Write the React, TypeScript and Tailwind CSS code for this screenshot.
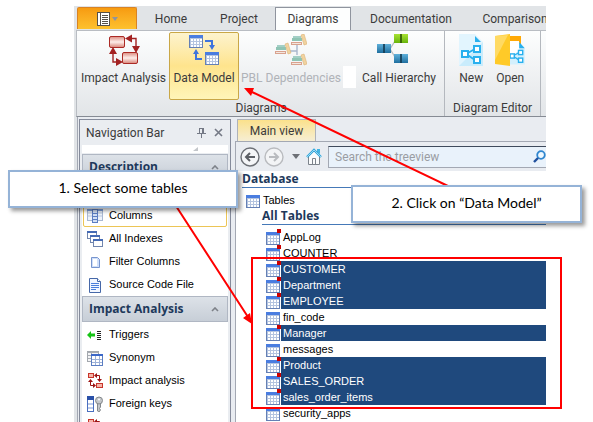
import type { ReactNode } from 'react';

const tables = [
  { name: 'AppLog', marked: true, selected: false },
  { name: 'COUNTER', marked: true, selected: false },
  { name: 'CUSTOMER', marked: true, selected: true },
  { name: 'Department', marked: true, selected: true },
  { name: 'EMPLOYEE', marked: true, selected: true },
  { name: 'fin_code', marked: false, selected: false },
  { name: 'Manager', marked: true, selected: true },
  { name: 'messages', marked: false, selected: false },
  { name: 'Product', marked: true, selected: true },
  { name: 'SALES_ORDER', marked: true, selected: true },
  { name: 'sales_order_items', marked: true, selected: true },
  { name: 'security_apps', marked: false, selected: false },
];

function TableShape({ x = 0, y = 0 }: { x?: number; y?: number }) {
  return (
    <g transform={`translate(${x} ${y})`}>
      <rect x="0.5" y="0.5" width="13" height="12" fill="#b4c4e0" stroke="#6580b5" />
      <rect x="0" y="0" width="14" height="3" fill="#4a7de0" />
      <path
        d="M2 4h2v2H2zM5 4h2v2H5zM8 4h2v2H8zM11 4h2v2h-2zM2 7h2v2H2zM5 7h2v2H5zM8 7h2v2H8zM11 7h2v2h-2zM2 10h2v2H2zM5 10h2v2H5zM8 10h2v2H8zM11 10h2v2h-2z"
        fill="#fff"
      />
    </g>
  );
}

function TableIcon({ marked = false }: { marked?: boolean }) {
  return (
    <svg width="15" height="16" viewBox="0 0 15 16" className="shrink-0">
      <TableShape y={3} />
      {marked && <rect x="11" y="0" width="4" height="4" fill="#cc0000" />}
    </svg>
  );
}

function ImpactIcon() {
  return (
    <svg width="32" height="32" viewBox="0 0 32 32">
      <defs>
        <linearGradient id="impactBox" x1="0" y1="0" x2="0" y2="1">
          <stop offset="0" stopColor="#dc8c80" />
          <stop offset="0.5" stopColor="#fdeeea" />
          <stop offset="1" stopColor="#d98478" />
        </linearGradient>
      </defs>
      <path d="M20 4.500h8v10M5 17v11h6" fill="none" stroke="#a32222" strokeWidth="1.4" />
      <path d="M17 4.500l7-4v8zM28 19l-4-7h8zM5 13l-4 7h8zM15 28l-7-4v8z" fill="#a32222" />
      <rect x="1.5" y="2.5" width="15" height="11" rx="1.5" fill="url(#impactBox)" stroke="#ab2a25" />
      <rect x="14.5" y="18.5" width="15" height="11" rx="1.5" fill="url(#impactBox)" stroke="#ab2a25" />
    </svg>
  );
}

function SmallImpactIcon() {
  return (
    <svg width="16" height="16" viewBox="0 0 16 16">
      <path d="M8 2.500h4.500V7M3.500 7v5.500H7" fill="none" stroke="#9c1414" />
      <path d="M7 2.500l3-2.500v5zM12.500 9L10 6h5zM3.500 6L1 9h5zM9 12.500L6 10v5z" fill="#9c1414" />
      <rect x="1.500" y="0.500" width="5" height="4" fill="#f5b4a8" stroke="#c8352b" />
      <rect x="9.500" y="10.500" width="6" height="4" fill="#f5b4a8" stroke="#c8352b" />
    </svg>
  );
}

function DataModelIcon() {
  return (
    <svg width="32" height="32" viewBox="0 0 32 32">
      <TableShape x={1} y={1} />
      <TableShape x={17} y={18} />
      <path d="M17 7h7v5M14 25H8v-6" fill="none" stroke="#3f74dd" strokeWidth="2" />
      <path d="M24 16l-3-5h6zM8 15l-3 5h6z" fill="#3f74dd" />
    </svg>
  );
}

function Books({ x, y }: { x: number; y: number }) {
  return (
    <g transform={`translate(${x} ${y})`}>
      <rect x="0" y="8" width="11" height="3" fill="#d9a28e" />
      <rect x="1" y="9" width="9" height="1" fill="#f3e6df" />
      <rect x="1" y="4" width="10" height="3" fill="#8fc4b4" />
      <rect x="2" y="2" width="8" height="2" fill="#a3cfc6" />
      <path d="M10 1l3-1 3 10-3 1z" fill="#f0d3a0" stroke="#deb376" strokeWidth="0.6" />
    </g>
  );
}

function PblIcon() {
  return (
    <svg width="32" height="32" viewBox="0 0 32 32">
      <path d="M15 17h7M22 11v10" stroke="#a9b7cd" strokeWidth="1.4" />
      <Books x={16} y={0} />
      <Books x={0} y={9} />
      <Books x={16} y={20} />
    </svg>
  );
}

function HierarchyIcon() {
  return (
    <svg width="46" height="32" viewBox="0 0 46 32">
      <defs>
        <linearGradient id="blueBox" x1="0" y1="0" x2="0" y2="1">
          <stop offset="0" stopColor="#5fb0da" />
          <stop offset="1" stopColor="#1f6f9f" />
        </linearGradient>
        <linearGradient id="greenBox" x1="0" y1="0" x2="0" y2="1">
          <stop offset="0" stopColor="#a8e234" />
          <stop offset="1" stopColor="#68b40c" />
        </linearGradient>
      </defs>
      <path d="M14 15l5-8M14 15l5 8" stroke="#b9bdc1" strokeWidth="1.4" />
      <rect x="1" y="10" width="14" height="9" fill="url(#blueBox)" />
      <rect x="18" y="0" width="14" height="9" fill="url(#greenBox)" />
      <rect x="18" y="20" width="14" height="9" fill="url(#blueBox)" />
      <path d="M8 10v9M25 20v9" stroke="#12384e" strokeWidth="1.6" />
      <path d="M25 0v9" stroke="#2c5205" strokeWidth="1.6" />
    </svg>
  );
}

function GraphNodes() {
  return (
    <g fill="#fff" stroke="#29b0ee" strokeWidth="2">
      <path d="M7 20l9-5M7 20l9 6" />
      <rect x="3" y="17" width="6" height="6" />
      <rect x="15" y="12" width="6" height="6" />
      <rect x="15" y="23" width="6" height="6" />
    </g>
  );
}

function NewIcon() {
  return (
    <svg width="24" height="32" viewBox="0 0 24 32">
      <path d="M0 0h16l8 8v24H0z" fill="#e2f5fe" />
      <path d="M24 8v24H0z" fill="#c9ecfc" />
      <path d="M16 2l6 6h-6z" fill="#29b0ee" />
      <GraphNodes />
    </svg>
  );
}

function OpenIcon() {
  return (
    <svg width="30" height="32" viewBox="0 0 30 32">
      <path d="M11 2h15v20H11z" fill="#ffa905" />
      <path d="M14 7h10v18H14z" fill="#fff" />
      <g transform="translate(13 8) scale(0.7)">
        <path d="M2 2h14l8 8v22H2z" fill="#d3f0fd" />
        <path d="M2 0h14v12L2 22z" fill="#fff" />
        <path d="M16 0l8 9h-8z" fill="#29b0ee" />
        <GraphNodes />
      </g>
      <path d="M0 2l15-2v32L0 30z" fill="#ffca28" />
      <path d="M0 2l13-1L0 26z" fill="#ffda63" />
    </svg>
  );
}

type RibbonButtonProps = { icon: ReactNode; label: string; className: string; disabled?: boolean };

function RibbonButton({ icon, label, className, disabled }: RibbonButtonProps) {
  return (
    <button
      type="button"
      disabled={disabled}
      className={`flex h-[68px] flex-col items-center gap-1 rounded-xs border pt-px whitespace-nowrap ${className}`}
    >
      {icon}
      <span className="leading-4">{label}</span>
    </button>
  );
}

function RibbonTab({ label, className, active }: { label: string; className: string; active?: boolean }) {
  return (
    <button
      type="button"
      className={`h-[23px] shrink-0 border-x border-t text-center ${className} ${
        active ? 'relative z-10 -mb-px h-6 border-[#8f949e] bg-[#fdfefe]' : 'border-transparent'
      }`}
    >
      {label}
    </button>
  );
}

function Ribbon() {
  return (
    <header>
      <div className="flex pt-px pl-[3px]">
        <button
          type="button"
          aria-label="Application menu"
          className="mr-[2px] flex h-[22px] w-[60px] shrink-0 items-center justify-center gap-[2px] rounded-t-xs border border-b-0 border-[#d98324] bg-linear-to-b from-[#f79b10] to-[#fdc12e]"
        >
          <svg width="13" height="14" viewBox="0 0 13 14">
            <rect x="0.5" y="0.5" width="12" height="13" fill="#fff" stroke="#55504a" />
            <path d="M3.5 1v12M5 3.5h6M5 5.5h6M5 7.5h6M5 9.5h6M5 11.5h6" stroke="#55504a" />
          </svg>
          <svg width="6" height="4" viewBox="0 0 6 4">
            <path d="M0 0h6L3 4z" fill="#8f949e" />
          </svg>
        </button>
        <RibbonTab label="Home" className="w-16" />
        <RibbonTab label="Project" className="w-[72px]" />
        <RibbonTab label="Diagrams" className="w-[76px]" active />
        <RibbonTab label="Documentation" className="w-[120px]" />
        <RibbonTab label="Comparison" className="w-[88px]" />
      </div>

      <div className="ml-[2px] flex h-[87px] border-t border-b border-l border-t-[#b9bdc3] border-b-[#868b94] border-l-[#b9bdc3] bg-linear-to-b from-[#fdfefe] to-[#e2e5e8]">
        <section className="flex flex-[367] flex-col justify-between border-r border-[#b4b8be] pt-px pl-px">
          <div className="flex">
            <RibbonButton icon={<ImpactIcon />} label="Impact Analysis" className="w-[91px] border-transparent" />
            <RibbonButton
              icon={<DataModelIcon />}
              label="Data Model"
              className="w-[70px] border-[#c9a747] bg-linear-to-b from-[#fdf3cd] via-[#fee48d] to-[#fff5b8]"
            />
            <RibbonButton
              icon={<PblIcon />}
              label="PBL Dependencies"
              className="w-[104px] border-transparent text-[#b0b3b8]"
              disabled
            />
            <span className="mt-[34px] h-[22px] w-[13px] bg-white" />
            <RibbonButton icon={<HierarchyIcon />} label="Call Hierarchy" className="w-[86px] border-transparent" />
          </div>
          <h2 className="text-center leading-4">Diagrams</h2>
        </section>
        <section className="flex flex-[95] flex-col justify-between border-r border-[#b4b8be] pt-px">
          <div className="flex pl-[6px]">
            <RibbonButton icon={<NewIcon />} label="New" className="w-10 border-transparent" />
            <RibbonButton icon={<OpenIcon />} label="Open" className="w-[38px] border-transparent" />
          </div>
          <h2 className="text-center leading-4 whitespace-nowrap">Diagram Editor</h2>
        </section>
        <div className="w-[5px]" />
      </div>
    </header>
  );
}

function ColumnsIcon() {
  return (
    <svg width="16" height="16" viewBox="0 0 16 16">
      <rect x="0.5" y="1.5" width="15" height="11" fill="#eef3fb" stroke="#a9b8d3" />
      <path d="M1 5h14M1 8h14" stroke="#b8c5dc" />
      <rect x="0" y="1" width="16" height="2" fill="#7fa0dc" />
      <rect x="5.5" y="1.5" width="5" height="13" fill="#d3e0f5" stroke="#5c7ec2" />
      <path d="M6 5.5h4M6 8.5h4M6 11.5h4" stroke="#5c7ec2" />
    </svg>
  );
}

function IndexesIcon() {
  return (
    <svg width="16" height="16" viewBox="0 0 16 16">
      <g fill="#fff" stroke="#7186ae">
        <rect x="0.5" y="0.5" width="9" height="7" />
        <rect x="3.5" y="4.5" width="9" height="7" />
        <rect x="6.5" y="8.5" width="9" height="7" />
      </g>
      <path d="M0 1h10M3 5h10M6 9h10" stroke="#456bb5" strokeWidth="2" />
    </svg>
  );
}

function FilterIcon() {
  return (
    <svg width="16" height="16" viewBox="0 0 16 16">
      <path d="M4.500 3.500h6l2 2v8h-8z" fill="#cfdffa" stroke="#7795ce" />
      <path d="M6 5h4v7H6z" fill="#fff" />
    </svg>
  );
}

function SourceIcon() {
  return (
    <svg width="16" height="16" viewBox="0 0 16 16">
      <path d="M2.500 1.500h8l3 3v11h-11z" fill="#f3f7ff" stroke="#4668a8" />
      <path d="M10.500 1.500v3h3" fill="#fff" stroke="#4668a8" />
      <path d="M4 6.500h8M4 8.500h8M4 10.500h8M4 12.500h5" stroke="#4b7fdb" />
    </svg>
  );
}

function TriggersIcon() {
  return (
    <svg width="16" height="16" viewBox="0 0 16 16">
      <path d="M0 8l4-4v2.500h4v3H4V12z" fill="#16c416" />
      <path d="M10 4.500h4M10 6.500h4M10 8.500h4M10 10.500h4M10 12.500h4" stroke="#222" />
    </svg>
  );
}

function SynonymIcon() {
  return (
    <svg width="16" height="16" viewBox="0 0 16 16">
      <rect x="0.5" y="1.5" width="11" height="10" fill="#f4f5f7" stroke="#a3a8ae" />
      <path d="M0 2.500h12M1 5.500h10M1 8.500h10M4.500 2v9" stroke="#a9adb3" />
      <rect x="4.5" y="4.5" width="11" height="11" fill="#fff" stroke="#5c7ec2" />
      <path d="M4 5h12" stroke="#3c68c8" strokeWidth="2" />
      <path d="M5 9.500h10M5 12.500h10M8.500 6v9M12.500 6v9" stroke="#9db1d8" />
    </svg>
  );
}

function KeysIcon() {
  return (
    <svg width="16" height="16" viewBox="0 0 16 16">
      <rect x="0.5" y="0.5" width="6" height="15" fill="#fff" stroke="#4a6fc0" />
      <rect x="0" y="0" width="7" height="4" fill="#2a50a8" />
      <path d="M1 8h5M1 12h5" stroke="#7f9bd4" />
      <path d="M10.500 7v8l1.500 1 1.500-2-1-1.500 1-1.500V7" fill="#c4c7ca" stroke="#84888c" />
      <circle cx="12" cy="4.500" r="3.500" fill="#c4c7ca" stroke="#84888c" />
      <circle cx="12" cy="3.500" r="1" fill="#fff" />
    </svg>
  );
}

function NavGroup({ title, children }: { title: string; children: ReactNode }) {
  return (
    <section>
      <h3 className="mb-px flex h-[26px] items-center justify-between border border-[#b0b7c3] bg-linear-to-b from-[#dde2e8] to-[#c7ced7] px-[6px] font-['Open_Sans',sans-serif] text-[12px] font-bold text-[#1e395b]">
        {title}
        <svg width="8" height="5" viewBox="0 0 8 5" className="mr-[2px]">
          <path d="M1 4l3-3 3 3" fill="none" stroke="#7d8188" strokeWidth="1.6" />
        </svg>
      </h3>
      <ul>{children}</ul>
    </section>
  );
}

function NavItem({ icon, label, current }: { icon: ReactNode; label?: string; current?: boolean }) {
  return (
    <li className={`mx-px rounded-xs border ${current ? 'border-[#ecc556]' : 'border-transparent'}`}>
      <a href="#" className="flex h-[21px] items-center gap-[6px] pl-[3px] text-black">
        {icon}
        {label}
      </a>
    </li>
  );
}

function NavigationBar() {
  return (
    <aside className="w-[152px] shrink-0 border-x border-t border-[#858b9b] bg-[#eaedf1] px-[2px]">
      <div className="flex h-[25px] items-center pr-[5px] pl-1">
        <h2 className="flex-1">Navigation Bar</h2>
        <button type="button" aria-label="Pin" className="mr-2">
          <svg width="9" height="10" viewBox="0 0 9 10">
            <path d="M2.500 0v5M5.500 0v5M6.500 0v5M2 .5h5M0 5.500h9M4.500 6v4" fill="none" stroke="#747985" />
          </svg>
        </button>
        <button type="button" aria-label="Close">
          <svg width="9" height="9" viewBox="0 0 9 9">
            <path d="M1 1l7 7M8 1l-7 7" stroke="#747985" strokeWidth="1.6" />
          </svg>
        </button>
      </div>
      <div className="mb-px flex h-2 items-center justify-end bg-white pr-[30px]">
        <svg width="5" height="4" viewBox="0 0 5 4">
          <path d="M5 0v4H0z" fill="#c3c6ca" />
        </svg>
      </div>
      <div className="bg-white font-['Liberation_Sans',sans-serif] text-[11px]">
        <NavGroup title="Description">
          <NavItem icon={<SynonymIcon />} />
          <NavItem icon={<ColumnsIcon />} label="Columns" current />
          <NavItem icon={<IndexesIcon />} label="All Indexes" />
          <NavItem icon={<FilterIcon />} label="Filter Columns" />
          <NavItem icon={<SourceIcon />} label="Source Code File" />
        </NavGroup>
        <NavGroup title="Impact Analysis">
          <NavItem icon={<TriggersIcon />} label="Triggers" />
          <NavItem icon={<SynonymIcon />} label="Synonym" />
          <NavItem icon={<SmallImpactIcon />} label="Impact analysis" />
          <NavItem icon={<KeysIcon />} label="Foreign keys" />
          <NavItem icon={<SmallImpactIcon />} />
        </NavGroup>
      </div>
    </aside>
  );
}

function Toolbar() {
  return (
    <div className="flex h-[30px] items-center border-t border-[#a3a8b3] bg-[#e9ecf1] pl-1">
      <button type="button" aria-label="Back" className="mr-1">
        <svg width="20" height="20" viewBox="0 0 20 20">
          <circle cx="10" cy="10" r="9" fill="#f5f6f8" stroke="#6d7076" strokeWidth="1.4" />
          <path d="M15 10H6M10 6l-4 4 4 4" fill="none" stroke="#5d6066" strokeWidth="2" />
        </svg>
      </button>
      <button type="button" aria-label="Forward" className="mr-2">
        <svg width="20" height="20" viewBox="0 0 20 20">
          <circle cx="10" cy="10" r="9" fill="#f3f4f6" stroke="#b9bbbf" strokeWidth="1.4" />
          <path d="M5 10h9M10 6l4 4-4 4" fill="none" stroke="#b9bbbf" strokeWidth="2" />
        </svg>
      </button>
      <button type="button" aria-label="History" className="mr-[6px]">
        <svg width="8" height="5" viewBox="0 0 8 5">
          <path d="M0 0h8L4 5z" fill="#6d7076" />
        </svg>
      </button>
      <button type="button" aria-label="Home" className="mr-[6px]">
        <svg width="16" height="17" viewBox="0 0 16 17">
          <path d="M11 1h3v5l-3-2z" fill="#43b4e2" />
          <path d="M2.500 8v8.500h11V8L8 3z" fill="#fafbfc" stroke="#7c838b" />
          <path d="M6.500 16v-5.500h3V16" fill="none" stroke="#7c838b" />
          <path d="M1 9l7-7 7 7" fill="none" stroke="#32a7dc" strokeWidth="2.4" />
          <path d="M1 9l7-7 7 7" fill="none" stroke="#b5e5f7" strokeWidth="0.8" />
        </svg>
      </button>
      <label className="flex h-[22px] min-w-0 flex-1 items-center border border-r-0 border-t-[#3f4a5c] border-b-[#a3a8b3] border-l-[#a3a8b3] bg-[#e9f2fb] pl-[6px]">
        <input
          type="text"
          placeholder="Search the treeview"
          aria-label="Search the treeview"
          className="min-w-0 flex-1 bg-transparent outline-none placeholder:text-[#9a9da3]"
        />
        <svg width="13" height="13" viewBox="0 0 13 13">
          <circle cx="8" cy="5" r="3.800" fill="#eef8ff" stroke="#2f86cf" strokeWidth="1.800" />
          <path d="M5 8l-4 4" stroke="#1f4f9c" strokeWidth="2.400" />
        </svg>
      </label>
    </div>
  );
}

function MainView() {
  return (
    <main className="flex min-w-0 flex-1 flex-col">
      <div className="flex h-[22px] items-end pl-[2px]">
        <button
          type="button"
          className="h-[22px] w-[79px] border border-b-0 border-[#aeb2ba] bg-linear-to-b from-[#fbe18b] to-[#f6eed3]"
        >
          Main view
        </button>
      </div>
      <div className="flex-1 border-l border-[#a3a8b3] bg-white">
        <Toolbar />
        <div className="pl-[6px] font-['Liberation_Sans',sans-serif] text-[11px] text-black">
          <h2 className="border-b border-[#4579b8] font-['Open_Sans',sans-serif] text-[12px] leading-4 font-bold text-[#1e395b]">
            Database
          </h2>
          <div className="mt-1 flex h-4 items-center gap-[2px] pl-1">
            <TableIcon />
            Tables
          </div>
          <div className="pl-5">
            <h3 className="border-b border-[#4579b8] font-['Open_Sans',sans-serif] text-[12px] leading-4 font-bold text-[#1e395b]">
              All Tables
            </h3>
            <ul className="mt-1 pl-1">
              {tables.map((table) => (
                <li key={table.name} className="flex h-4">
                  <TableIcon marked={table.marked} />
                  <span
                    className={`flex-1 pl-[2px] leading-4 ${table.selected ? 'bg-[#1f497d] text-white' : ''}`}
                  >
                    {table.name}
                  </span>
                </li>
              ))}
            </ul>
          </div>
        </div>
      </div>
    </main>
  );
}

function Callout({ children, className }: { children: ReactNode; className: string }) {
  return (
    <p
      className={`absolute flex h-[38px] items-center justify-center border-2 border-[#95b3d7] bg-white pb-1 font-['Lato',sans-serif] text-[14px] text-black shadow-[3px_3px_4px_rgba(0,0,0,0.4)] ${className}`}
    >
      {children}
    </p>
  );
}

export default function App() {
  return (
    <div className="relative h-screen overflow-hidden bg-white pt-[6px] pr-[47px] pl-[74px] font-['Roboto',sans-serif] text-[12px] text-[#3b3b3b]">
      <div className="overflow-hidden bg-[#e1e4e7]">
        <Ribbon />
        <div className="ml-[3px] flex gap-1 border-l border-[#a3a8b3] bg-[#e9ecf1] pt-[2px] pl-px">
          <NavigationBar />
          <MainView />
        </div>
      </div>

      {/* Annotations over the window */}
      <div className="absolute top-[257px] left-[251px] h-[152px] w-[311px] border-2 border-[#ff0000]" />
      <svg width="593" height="422" viewBox="0 0 593 422" className="pointer-events-none absolute top-0 left-0">
        <path d="M176 206L248 317M450 187L252 92" stroke="#ff0000" strokeWidth="2" />
        <path d="M252 324L243 318L250 313zM244 88L254 88L251 96z" fill="#ff0000" />
      </svg>
      <Callout className="top-[170px] left-[8px] w-[230px]">1. Select some tables</Callout>
      <Callout className="top-[185px] left-[351px] w-[231px]">2. Click on “Data Model”</Callout>
    </div>
  );
}
